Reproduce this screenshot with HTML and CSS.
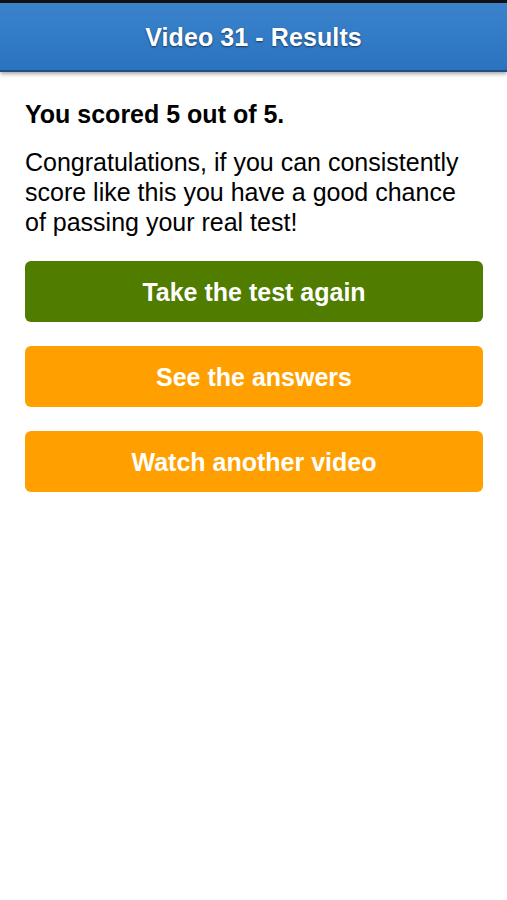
FILE: index.html
```html
<!DOCTYPE html>
<html>
<head>
<meta charset="utf-8">
<link rel="stylesheet" href="styles.css">
</head>
<body>
<header class="topbar">
  <h1 class="title">Video 31 - Results</h1>
</header>
<main class="content">
  <p class="score">You scored 5 out of 5.</p>
  <p class="message">Congratulations, if you can consistently score like this you have a good chance of passing your real test!</p>
  <div class="actions">
    <a class="btn btn-green" href="#">Take the test again</a>
    <a class="btn btn-orange" href="#">See the answers</a>
    <a class="btn btn-orange" href="#">Watch another video</a>
  </div>
</main>
</body>
</html>
```
FILE: styles.css
```css
html, body {
  margin: 0;
  padding: 0;
  background: #ffffff;
}
body {
  font-family: "Liberation Sans", Arial, sans-serif;
  color: #000;
}
.topbar {
  border-top: 3px solid #111;
  height: 67px;
  background: linear-gradient(#3a83cc, #2b73bf);
  border-bottom: 2px solid #1f4f80;
  box-shadow: 0 2px 4px rgba(0,0,0,0.35);
  display: flex;
  align-items: center;
  justify-content: center;
}
.title {
  margin: 2px 0 0;
  color: #fff;
  font-size: 25px;
  font-weight: bold;
  letter-spacing: 0.1px;
  text-shadow: 0 1px 2px rgba(0,0,0,0.55);
}
.content {
  padding: 0 24px 0 25px;
}
.score {
  margin: 27px 0 0;
  font-size: 25px;
  font-weight: bold;
  line-height: 30px;
}
.message {
  margin: 18px 0 0;
  font-size: 25px;
  line-height: 30px;
}
.actions {
  margin-top: 24px;
  display: flex;
  flex-direction: column;
  gap: 24px;
}
.btn {
  display: flex;
  align-items: center;
  justify-content: center;
  height: 61px;
  padding-top: 2px;
  box-sizing: border-box;
  border-radius: 6px;
  color: #fff;
  font-size: 25px;
  font-weight: bold;
  text-decoration: none;
}
.btn-green {
  background: #507c00;
}
.btn-orange {
  background: #ffa000;
}
```
